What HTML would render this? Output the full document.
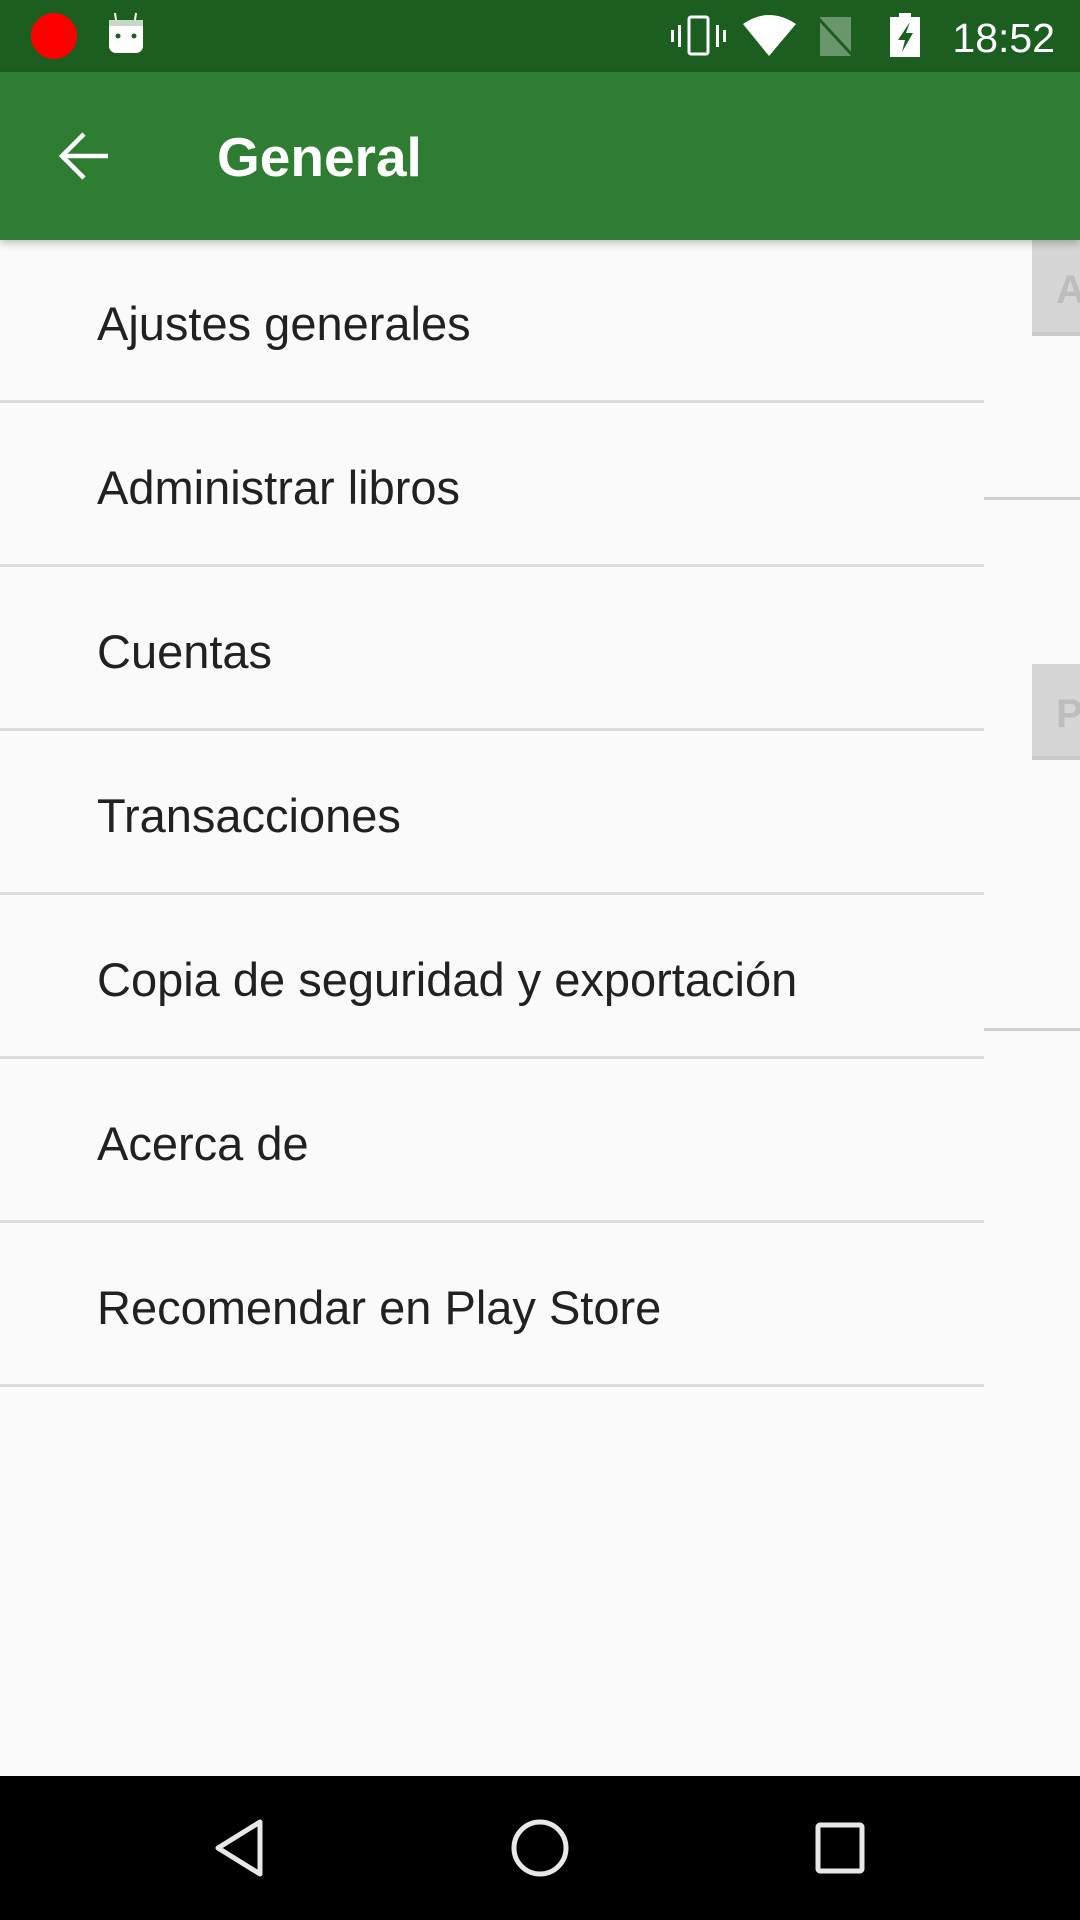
<!DOCTYPE html>
<html><head><meta charset="utf-8"><style>
*{margin:0;padding:0;box-sizing:border-box}
body{width:1080px;height:1920px;background:#fafafa;position:relative;overflow:hidden;font-family:"Liberation Sans",sans-serif}
.sb{position:absolute;left:0;top:0;width:1080px;height:72px;background:#1b5e20}
.tb{position:absolute;left:0;top:72px;width:1080px;height:168px;background:#2e7d32;box-shadow:0 3px 8px rgba(0,0,0,.25);z-index:2}
.title{position:absolute;left:217px;top:130px;font-size:55px;font-weight:bold;color:#fff;z-index:3;line-height:1}
.item{position:absolute;left:97px;font-size:47px;color:#212121;line-height:1}
.div{position:absolute;left:0;width:984px;height:3px;background:#dcdcdc}
.rdiv{position:absolute;left:984px;width:96px;height:3px;background:#d0d0d0}
.box{position:absolute;left:1032px;width:48px;background:#d6d6d6;border-bottom:4px solid #cbcbcb;overflow:hidden}
.box span{position:absolute;left:24px;font-size:40px;font-weight:bold;color:#bdbdbd}
.nav{position:absolute;left:0;top:1776px;width:1080px;height:144px;background:#000}
</style></head><body>
<div class="sb"></div>
<svg style="position:absolute;left:0;top:0;z-index:4" width="1080" height="72">
<circle cx="54" cy="36" r="23" fill="#f00"/>
<rect x="109" y="20" width="34" height="33" rx="7" fill="#fff"/>
<rect x="109" y="20" width="34" height="6" fill="#c8d8c8"/>
<line x1="116" y1="20" x2="115" y2="13" stroke="#fff" stroke-width="2"/>
<line x1="135" y1="20" x2="136" y2="13" stroke="#fff" stroke-width="2"/>
<circle cx="118" cy="36" r="2.5" fill="#1b5e20"/><circle cx="134" cy="36" r="2.5" fill="#1b5e20"/>
<rect x="689" y="17" width="19" height="37" rx="2" fill="none" stroke="#fff" stroke-width="3"/>
<rect x="671" y="30" width="3" height="12" fill="#fff"/><rect x="678" y="25" width="3" height="22" fill="#fff"/>
<rect x="716" y="25" width="3" height="22" fill="#fff"/><rect x="723" y="30" width="3" height="12" fill="#fff"/>
<path d="M743 24 Q769 6 796 24 L769 56 Z" fill="#fff"/>
<path d="M820 17 H851 V56 H820 Z" fill="#fff" opacity=".35"/>
<line x1="818" y1="18" x2="854" y2="57" stroke="#1b5e20" stroke-width="3"/>
<rect x="890" y="17" width="30" height="40" fill="#fff"/><rect x="899" y="13" width="12" height="5" fill="#fff"/>
<path d="M910 22 L898 40 H905 L902 52 L913 33 H906 Z" fill="#1b5e20"/>
<text x="1055" y="52" text-anchor="end" font-family="Liberation Sans" font-size="41" fill="#fff">18:52</text>
</svg>
<div class="tb"></div>
<svg style="position:absolute;left:56px;top:128px;z-index:3" width="56" height="56"><path d="M52 28 H8 M28 6 L6 28 L28 50" stroke="#fff" stroke-width="4.5" fill="none"/></svg>
<div class="title">General</div>

<div class="box" style="top:240px;height:96px"><span style="top:28px">A</span></div>
<div class="box" style="top:664px;height:96px"><span style="top:28px">P</span></div>
<div class="rdiv" style="top:497px"></div>
<div class="rdiv" style="top:1028px"></div>

<div class="item" style="top:300px">Ajustes generales</div><div class="div" style="top:400px"></div>
<div class="item" style="top:464px">Administrar libros</div><div class="div" style="top:564px"></div>
<div class="item" style="top:628px">Cuentas</div><div class="div" style="top:728px"></div>
<div class="item" style="top:792px">Transacciones</div><div class="div" style="top:892px"></div>
<div class="item" style="top:956px">Copia de seguridad y exportación</div><div class="div" style="top:1056px"></div>
<div class="item" style="top:1120px">Acerca de</div><div class="div" style="top:1220px"></div>
<div class="item" style="top:1284px">Recomendar en Play Store</div><div class="div" style="top:1384px"></div>

<div class="nav"></div>
<svg style="position:absolute;left:0;top:1776px" width="1080" height="144">
<path d="M260 46 L218 72 L260 98 Z" fill="none" stroke="#e8e8e8" stroke-width="5" stroke-linejoin="round"/>
<circle cx="540" cy="72" r="26" fill="none" stroke="#e8e8e8" stroke-width="5"/>
<rect x="818" y="49" width="44" height="46" rx="2" fill="none" stroke="#e8e8e8" stroke-width="5"/>
</svg>
</body></html>
